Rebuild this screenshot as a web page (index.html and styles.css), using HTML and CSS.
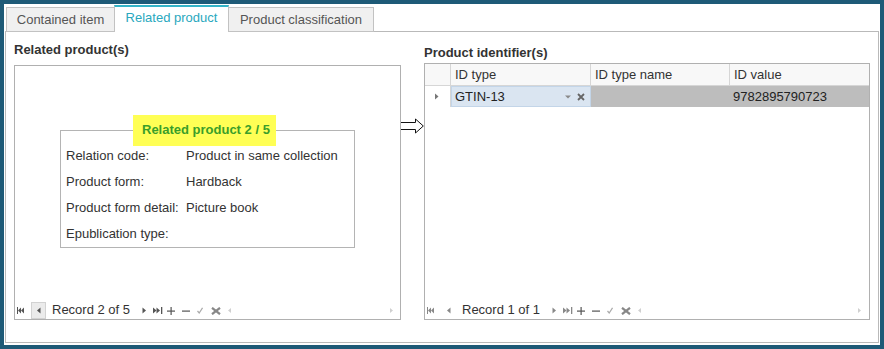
FILE: index.html
```html
<!DOCTYPE html>
<html>
<head>
<meta charset="utf-8">
<link rel="stylesheet" href="styles.css">
</head>
<body>
<div class="window">
  <div class="tabs">
    <div class="tab tab-1">Contained item</div>
    <div class="tab tab-active">Related product</div>
    <div class="tab tab-3">Product classification</div>
  </div>
  <div class="panel">
    <section class="col-left">
      <h2 class="heading heading-left">Related product(s)</h2>
      <div class="box box-left">
        <fieldset class="record">
          <legend class="record-title">Related product 2 / 5</legend>
          <div class="rows">
            <div class="row"><span class="lbl">Relation code:</span><span>Product in same collection</span></div>
            <div class="row"><span class="lbl">Product form:</span><span>Hardback</span></div>
            <div class="row"><span class="lbl">Product form detail:</span><span>Picture book</span></div>
            <div class="row"><span class="lbl">Epublication type:</span><span></span></div>
          </div>
        </fieldset>
        <div class="nav">
          <svg class="ni ni-first" width="7" height="7" viewBox="0 0 7 7"><rect x="0" y="0" width="1" height="7" fill="#555"/><polygon points="1,3.5 4,0.5 4,6.5" fill="#555"/><polygon points="4,3.5 7,0.5 7,6.5" fill="#555"/></svg>
          <span class="nav-btn pressed"><svg width="4" height="7" viewBox="0 0 4 7"><polygon points="0,3.5 3.5,0.5 3.5,6.5" fill="#555"/></svg></span>
          <span class="nav-text">Record 2 of 5</span>
          <svg class="ni ni-next" width="4" height="7" viewBox="0 0 4 7"><polygon points="0.5,0.5 4,3.5 0.5,6.5" fill="#555"/></svg>
          <svg class="ni ni-last" width="10" height="7" viewBox="0 0 10 7"><polygon points="0,0.5 3.5,3.5 0,6.5" fill="#555"/><polygon points="3.5,0.5 7,3.5 3.5,6.5" fill="#555"/><rect x="8" y="0" width="1.3" height="7" fill="#555"/></svg>
          <svg class="ni ni-plus" width="8" height="8" viewBox="0 0 8 8"><rect x="3.5" y="0" width="1.2" height="8" fill="#555"/><rect x="0" y="3.5" width="8" height="1.2" fill="#555"/></svg>
          <svg class="ni ni-minus" width="8" height="8" viewBox="0 0 8 8"><rect x="0" y="3.5" width="8" height="1.2" fill="#555"/></svg>
          <svg class="ni ni-check" width="6" height="7" viewBox="0 0 6 7"><polyline points="0.5,4 2.2,6 5.5,0.8" fill="none" stroke="#aaa" stroke-width="1.2"/></svg>
          <svg class="ni ni-cancel" width="10" height="8" viewBox="0 0 10 8"><path d="M1 0.8 L9 7.2 M9 0.8 L1 7.2" stroke="#888" stroke-width="2.2"/></svg>
          <svg class="ni ni-back" width="4" height="7" viewBox="0 0 4 7"><polygon points="0,3.5 3,1 3,6" fill="#d0d0d0"/></svg>
          <svg class="ni ni-fwd" width="4" height="7" viewBox="0 0 4 7"><polygon points="1,1 4,3.5 1,6" fill="#d0d0d0"/></svg>
        </div>
      </div>
    </section>
    <div class="arrow-col">
      <svg class="link-arrow" width="23" height="16" viewBox="0 0 23 16"><path d="M0 4.5 H14.5 V1 L22.3 8 L14.5 15 V11.5 H0" fill="#fff" stroke="#111" stroke-width="1"/></svg>
    </div>
    <section class="col-right">
      <h2 class="heading heading-right">Product identifier(s)</h2>
      <div class="box box-right">
        <div class="grid">
          <div class="gh gh-ind"></div>
          <div class="gh">ID type</div>
          <div class="gh">ID type name</div>
          <div class="gh gh-last">ID value</div>
          <div class="gd gd-ind"><svg width="4" height="7" viewBox="0 0 4 7"><polygon points="0,0.5 3.5,3.5 0,6.5" fill="#777"/></svg></div>
          <div class="gd gd-edit"><span>GTIN-13</span><svg class="dd" width="6" height="4" viewBox="0 0 6 4"><polygon points="0,0.5 6,0.5 3,3.5" fill="#8a8a8a"/></svg><svg class="clr" width="8" height="8" viewBox="0 0 8 8"><path d="M1 1 L7 7 M7 1 L1 7" stroke="#666" stroke-width="1.8"/></svg></div>
          <div class="gd gd-gray"></div>
          <div class="gd gd-gray">9782895790723</div>
        </div>
        <div class="nav">
          <svg class="ni ni-first" width="7" height="7" viewBox="0 0 7 7"><rect x="0" y="0" width="1" height="7" fill="#888"/><polygon points="1,3.5 4,0.5 4,6.5" fill="#888"/><polygon points="4,3.5 7,0.5 7,6.5" fill="#888"/></svg>
          <span class="nav-btn"><svg width="4" height="7" viewBox="0 0 4 7"><polygon points="0,3.5 3.5,0.5 3.5,6.5" fill="#888"/></svg></span>
          <span class="nav-text">Record 1 of 1</span>
          <svg class="ni ni-next" width="4" height="7" viewBox="0 0 4 7"><polygon points="0.5,0.5 4,3.5 0.5,6.5" fill="#888"/></svg>
          <svg class="ni ni-last" width="10" height="7" viewBox="0 0 10 7"><polygon points="0,0.5 3.5,3.5 0,6.5" fill="#888"/><polygon points="3.5,0.5 7,3.5 3.5,6.5" fill="#888"/><rect x="8" y="0" width="1.3" height="7" fill="#888"/></svg>
          <svg class="ni ni-plus" width="8" height="8" viewBox="0 0 8 8"><rect x="3.5" y="0" width="1.2" height="8" fill="#555"/><rect x="0" y="3.5" width="8" height="1.2" fill="#555"/></svg>
          <svg class="ni ni-minus" width="8" height="8" viewBox="0 0 8 8"><rect x="0" y="3.5" width="8" height="1.2" fill="#555"/></svg>
          <svg class="ni ni-check" width="6" height="7" viewBox="0 0 6 7"><polyline points="0.5,4 2.2,6 5.5,0.8" fill="none" stroke="#aaa" stroke-width="1.2"/></svg>
          <svg class="ni ni-cancel" width="10" height="8" viewBox="0 0 10 8"><path d="M1 0.8 L9 7.2 M9 0.8 L1 7.2" stroke="#888" stroke-width="2.2"/></svg>
          <svg class="ni ni-back" width="4" height="7" viewBox="0 0 4 7"><polygon points="0,3.5 3,1 3,6" fill="#d0d0d0"/></svg>
          <svg class="ni ni-fwd ni-fwd-r" width="4" height="7" viewBox="0 0 4 7"><polygon points="1,1 4,3.5 1,6" fill="#d0d0d0"/></svg>
        </div>
      </div>
    </section>
  </div>
</div>
</body>
</html>
```
FILE: styles.css
```css
html, body {
  margin: 0;
}
body {
  padding: 4px;
  background: #1e5a77;
  font-family: "Liberation Sans", Arial, sans-serif;
  font-size: 13px;
  color: #333;
}
.window {
  width: 876px;
  height: 341px;
  background: #fff;
  padding: 0 1px;
  box-sizing: border-box;
}
.tabs {
  display: flex;
  align-items: flex-end;
  height: 28px;
  padding-left: 1px;
  margin-bottom: -1px;
  position: relative;
  z-index: 1;
}
.tab {
  box-sizing: border-box;
  height: 25px;
  border: 1px solid #c2c2c2;
  background: #f0f0f0;
  color: #555;
  text-align: center;
  line-height: 23px;
  font-size: 13px;
  white-space: nowrap;
}
.tab-1 { width: 109px; }
.tab-active {
  width: 115px;
  height: 27px;
  margin-left: -1px;
  border-top: 2px solid #33b3c7;
  border-bottom: none;
  background: #fff;
  color: #29a8be;
  line-height: 22px;
  position: relative;
  z-index: 2;
}
.tab-3 { width: 146px; margin-left: -1px; }

.panel {
  box-sizing: border-box;
  height: 312px;
  border: 1px solid #b9b9b9;
  display: flex;
  padding: 0 8px;
}
.col-left { width: 387px; display: flex; flex-direction: column; }
.arrow-col { width: 23px; }
.col-right { width: 446px; display: flex; flex-direction: column; }

.heading {
  margin: 0;
  font-size: 13px;
  font-weight: 700;
  line-height: 16px;
  color: #333;
}
.heading-left { margin-top: 10px; margin-bottom: 7px; }
.heading-right { margin-top: 13px; margin-bottom: 2px; }

.box {
  box-sizing: border-box;
  border: 1px solid #b0b0b0;
  background: #fff;
  display: flex;
  flex-direction: column;
}
.box-left { height: 255px; }
.box-right { height: 257px; }

.link-arrow { display: block; margin-top: 86px; }

.record {
  box-sizing: border-box;
  width: 295px;
  margin: 49px 0 0 45px;
  padding: 0 0 0 5px;
  border: 1px solid #b4b4b4;
  min-inline-size: 0;
}
.record-title {
  margin-left: 67px;
  padding: 0 6px 0 9px;
  height: 31px;
  line-height: 30px;
  background: #ffff55;
  color: #3a9e2a;
  font-weight: 700;
  font-size: 13px;
}
.rows { margin-top: -3px; }
.row {
  display: flex;
  line-height: 26px;
  height: 26px;
  color: #333;
}
.lbl { width: 120px; flex: none; }

.nav {
  margin-top: auto;
  height: 17px;
  display: flex;
  align-items: center;
}
.ni { display: block; flex: none; }
.ni-first { margin-left: 2px; }
.nav-btn {
  box-sizing: border-box;
  width: 15px;
  height: 17px;
  margin-left: 7px;
  display: flex;
  align-items: center;
  justify-content: center;
  border: 1px solid transparent;
}
.nav-btn.pressed {
  background: #ebebeb;
  border-color: #d2d2d2;
}
.nav-btn svg { display: block; }
.nav-text {
  width: 90px;
  margin-left: 6px;
  font-size: 13px;
  line-height: 17px;
  color: #333;
  white-space: nowrap;
  position: relative;
  top: -1px;
}
.ni-last { margin-left: 7px; }
.ni-plus { margin-left: 4px; }
.ni-minus { margin-left: 7px; }
.ni-check { margin-left: 7px; }
.ni-cancel { margin-left: 8px; }
.ni-back { margin-left: 7px; }
.ni-fwd { margin-left: auto; margin-right: 7px; }
.ni-fwd-r { margin-right: 8px; }

.grid {
  display: grid;
  grid-template-columns: 26px 140px 139px 1fr;
  grid-auto-rows: auto;
}
.gh {
  box-sizing: border-box;
  height: 22px;
  line-height: 21px;
  padding-left: 4px;
  background: #f8f8f8;
  border-right: 1px solid #d6d6d6;
  border-bottom: 1px solid #d6d6d6;
  color: #333;
  white-space: nowrap;
}
.gh-last { border-right: none; }
.gd {
  box-sizing: border-box;
  height: 21px;
  line-height: 21px;
  color: #222;
  white-space: nowrap;
}
.gd-ind {
  border-right: 1px solid #d6d6d6;
  display: flex;
  align-items: center;
  padding-left: 10px;
}
.gd-ind svg { display: block; }
.gd-edit {
  background: #dae5f1;
  border: 1px solid #c3d5e8;
  line-height: 19px;
  padding-left: 3px;
  display: flex;
  align-items: center;
}
.gd-edit .dd { display: block; margin-left: auto; }
.gd-edit .clr { display: block; margin-left: 6px; margin-right: 5px; }
.gd-gray {
  background: #bdbdbd;
  padding-left: 3px;
}
```
